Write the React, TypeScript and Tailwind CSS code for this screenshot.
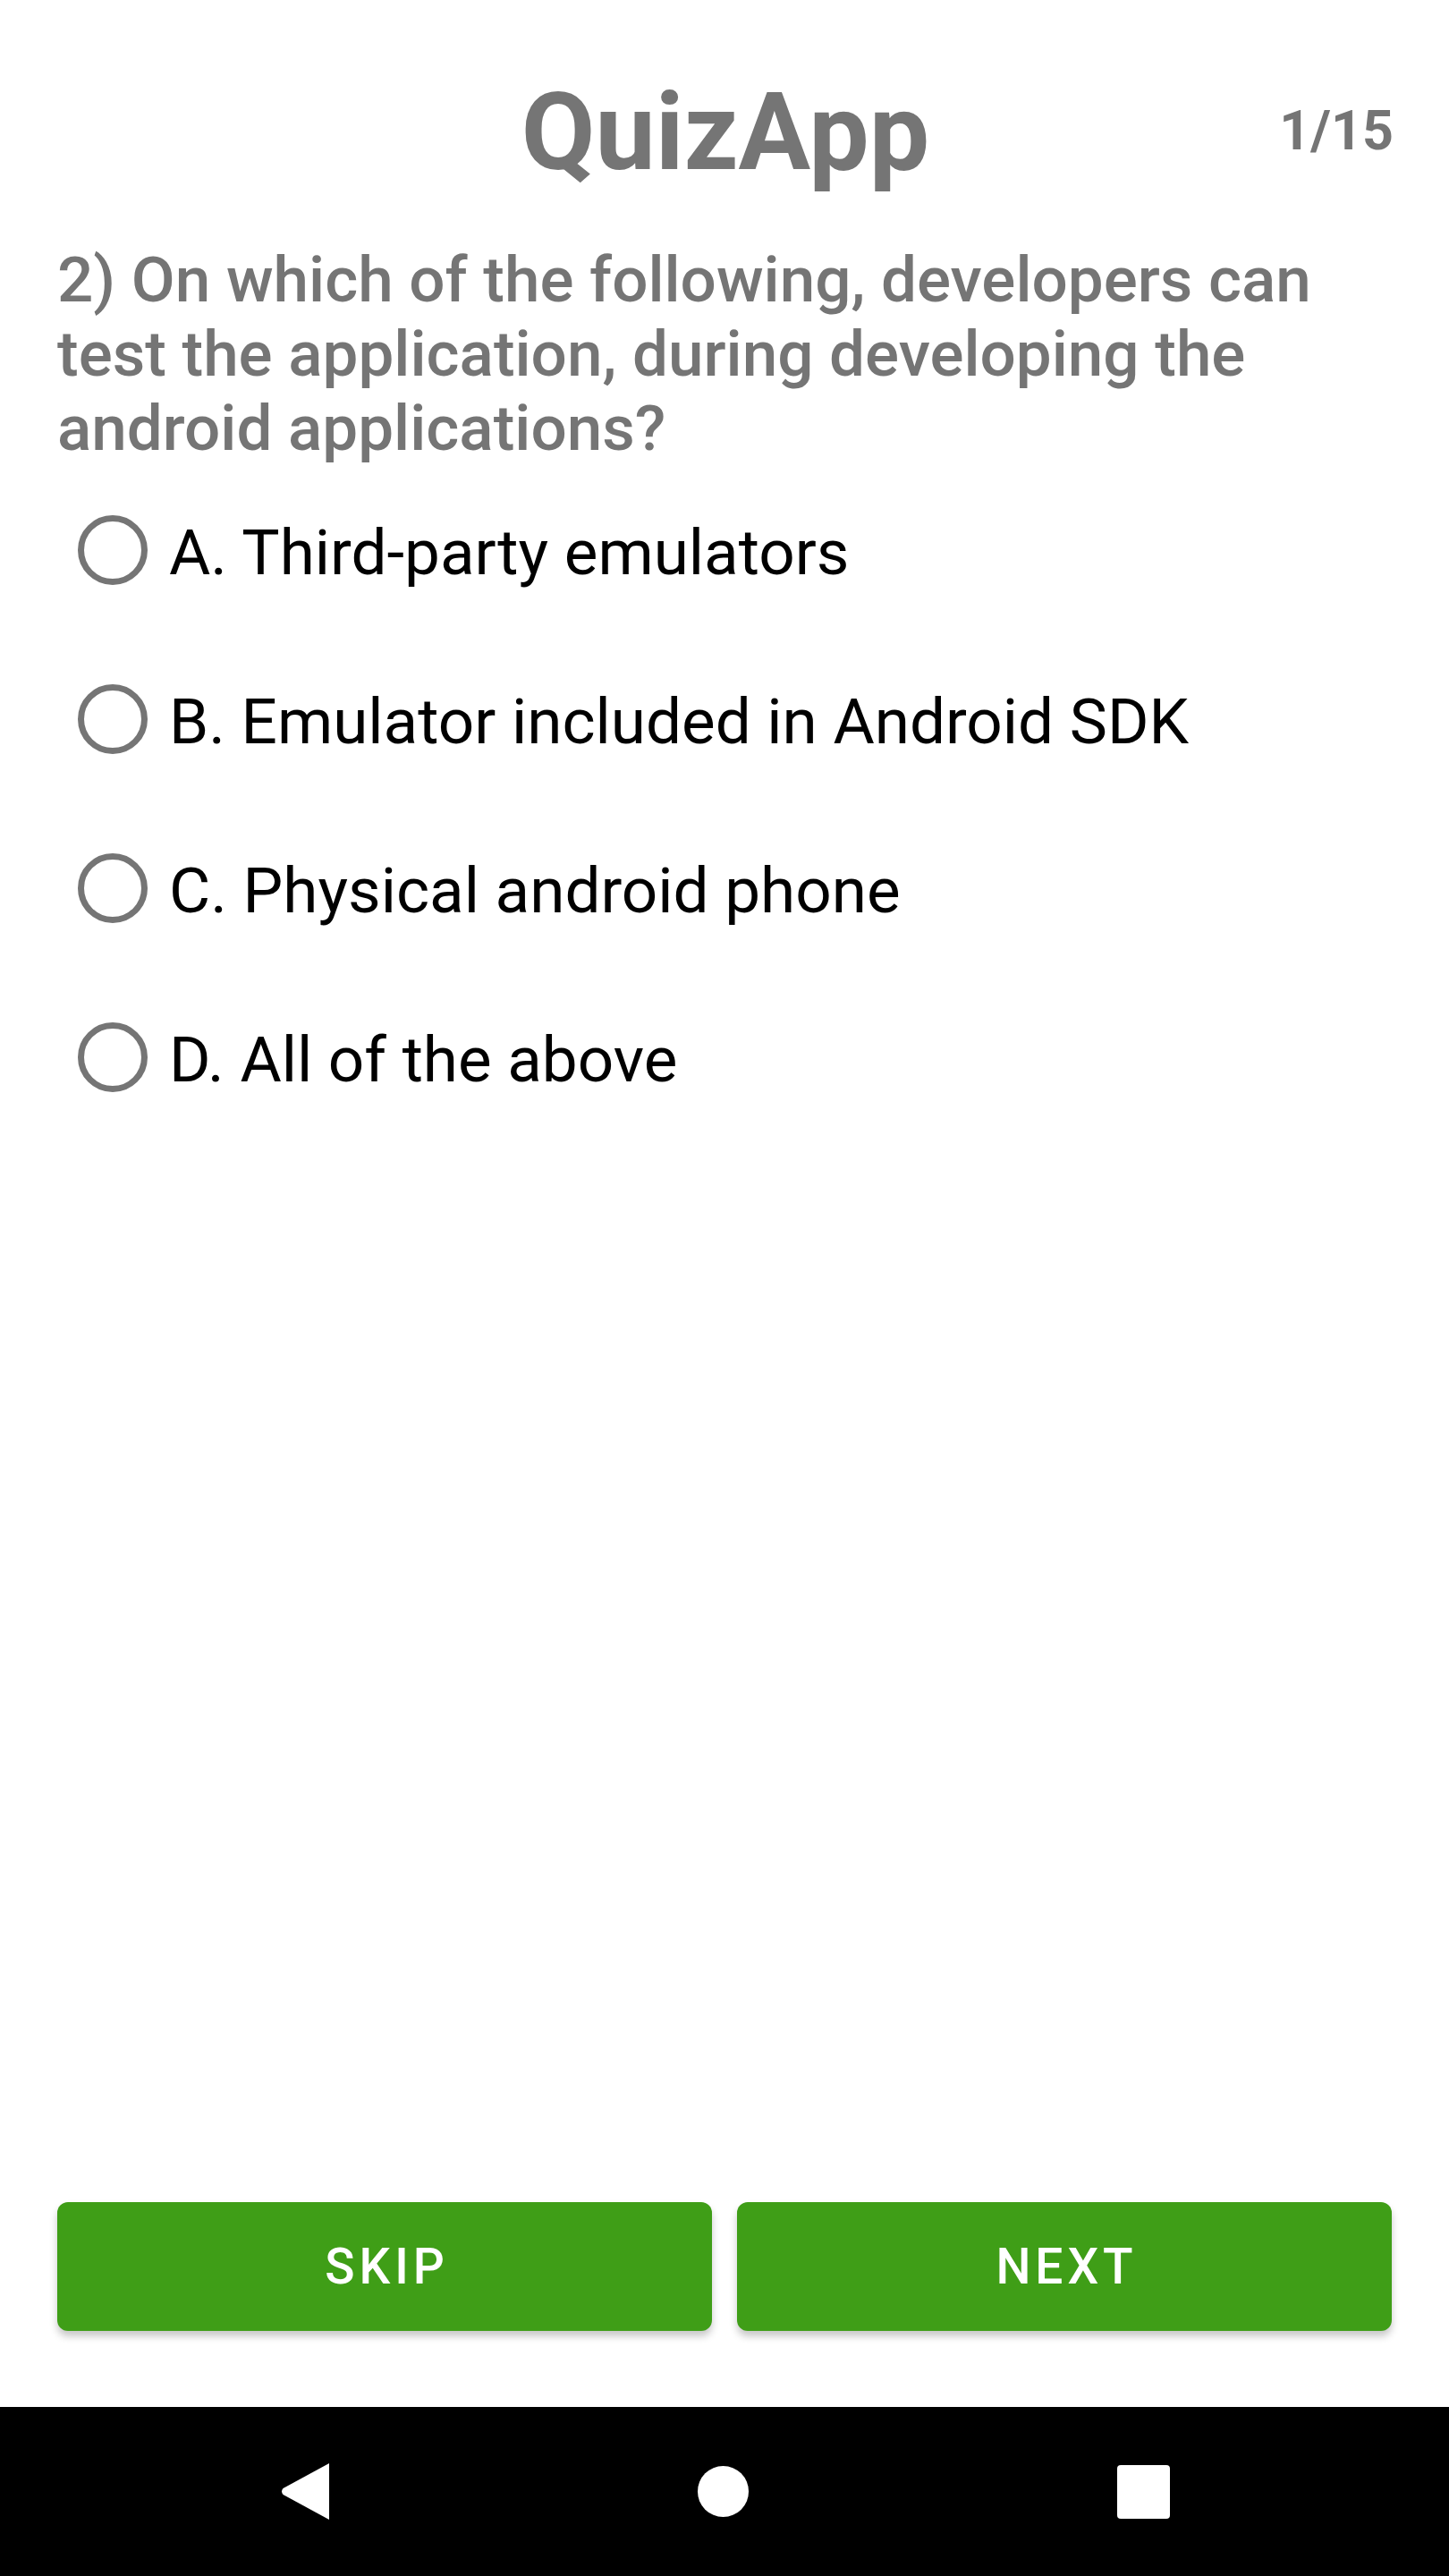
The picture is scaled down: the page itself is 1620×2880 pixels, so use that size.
import React from "react";

const options = [
  "A. Third-party emulators",
  "B. Emulator included in Android SDK",
  "C. Physical android phone",
  "D. All of the above",
];

export default function App() {
  return (
    <div
      className="flex h-[2880px] w-[1620px] flex-col bg-white"
      style={{ fontFamily: "Roboto, 'Noto Sans', sans-serif" }}
    >
      {/* Header */}
      <div className="grid grid-cols-[1fr_auto_1fr] items-start pl-[64px] pr-[62px] pt-[79px]">
        <div />
        <h1 className="text-[120px] font-bold leading-[138px] text-[#757575]">QuizApp</h1>
        <div className="mt-[31px] justify-self-end text-[61px] font-bold leading-[72px] text-[#757575]">
          1/15
        </div>
      </div>

      {/* Question */}
      <p className="mt-[54px] px-[64px] text-[71px] font-medium leading-[83px] text-[#757575]">
        2) On which of the following, developers can test the application, during developing the
        android applications?
      </p>

      {/* Options */}
      <div className="flex flex-col px-[64px]">
        {options.map((o) => (
          <label key={o} className="flex h-[189px] items-center">
            <span className="ml-[23px] box-border h-[78px] w-[78px] shrink-0 rounded-full border-[7px] border-[#757575]" />
            <span className="ml-[24px] pt-[5px] text-[71px] leading-[83px] text-black">{o}</span>
          </label>
        ))}
      </div>

      <div className="flex-1" />

      {/* Buttons */}
      <div className="mb-[85px] flex gap-[28px] px-[64px]">
        <button className="flex h-[144px] flex-1 items-center justify-center rounded-[12px] bg-[#3f9e17] pl-[0.09em] text-[55px] font-medium tracking-[0.09em] text-white shadow-[0_6px_8px_rgba(0,0,0,0.22)]">
          SKIP
        </button>
        <button className="flex h-[144px] flex-1 items-center justify-center rounded-[12px] bg-[#3f9e17] pl-[0.09em] text-[55px] font-medium tracking-[0.09em] text-white shadow-[0_6px_8px_rgba(0,0,0,0.22)]">
          NEXT
        </button>
      </div>

      {/* Navigation bar */}
      <div className="flex h-[189px] items-center justify-center gap-[412px] bg-black">
        <svg width="55" height="63" viewBox="0 0 55 63">
          <path d="M55 0 V63 L3.5 35 Q0.5 31.5 3.5 28 Z" fill="white" />
        </svg>
        <div className="h-[57px] w-[57px] rounded-full bg-white" />
        <div className="h-[60px] w-[59px] rounded-[4px] bg-white" />
      </div>
    </div>
  );
}
